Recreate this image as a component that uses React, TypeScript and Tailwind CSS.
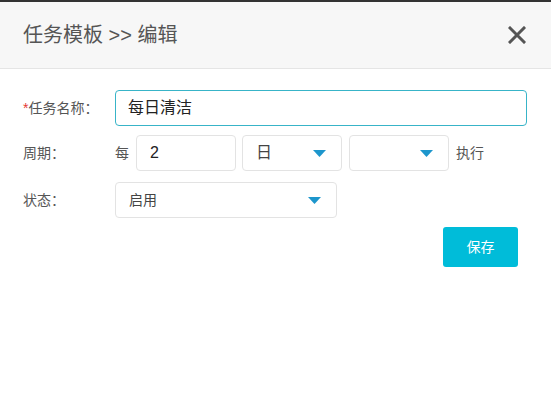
const font = { fontFamily: '"Liberation Sans", "Noto Sans CJK SC", sans-serif' };

const Caret = () => (
  <svg width="13" height="7" viewBox="0 0 13 7" className="shrink-0">
    <path d="M0 0 L13 0 L6.5 7 Z" fill="#1d96cc" />
  </svg>
);

const Select = ({ value, className }: { value: string; className: string }) => (
  <div
    className={`flex items-center justify-between h-[36px] border border-[#e3e3e3] rounded-[4px] pl-[13px] pr-[15px] ${className}`}
  >
    <span>{value}</span>
    <Caret />
  </div>
);

export default function App() {
  return (
    <div className="w-[551px] h-[393px] bg-white border-t-2 border-[#333]" style={font}>
      {/* Header */}
      <div className="flex items-center justify-between h-[67px] bg-[#f7f7f7] border-b border-[#e5e5e5] pl-[23px] pr-[25px]">
        <h1 className="text-[20px] text-[#555] leading-none">任务模板 &gt;&gt; 编辑</h1>
        <svg width="18" height="18" viewBox="0 0 18 18">
          <path d="M2 2 L16 16 M16 2 L2 16" stroke="#555" strokeWidth="3" strokeLinecap="square" />
        </svg>
      </div>

      {/* Form */}
      <div className="pl-[23px] pr-[24px] pt-[21px] text-[14px] text-[#555]">
        <div className="flex items-center">
          <label className="w-[92px]">
            <span className="text-[#e53935]">*</span>任务名称：
          </label>
          <div className="flex-1 flex items-center h-[36px] border border-[#38b4c8] rounded-[4px] px-[12px] text-[16px] text-[#222]">
            每日清洁
          </div>
        </div>

        <div className="flex items-center mt-[9px]">
          <label className="w-[92px]">周期：</label>
          <span className="w-[21px]">每</span>
          <div className="flex items-center w-[100px] h-[36px] border border-[#e3e3e3] rounded-[4px] px-[13px] text-[16px] text-[#222]">
            2
          </div>
          <Select value="日" className="w-[100px] ml-[6px] text-[16px] text-[#444]" />
          <Select value="" className="w-[100px] ml-[7px]" />
          <span className="ml-[7px]">执行</span>
        </div>

        <div className="flex items-center mt-[11px]">
          <label className="w-[92px]">状态：</label>
          <Select value="启用" className="w-[222px] text-[#444]" />
        </div>

        <div className="flex justify-end mt-[9px] pr-[9px]">
          <button className="w-[75px] h-[40px] rounded-[3px] bg-[#00bcd9] text-white text-[14px]">保存</button>
        </div>
      </div>
    </div>
  );
}
